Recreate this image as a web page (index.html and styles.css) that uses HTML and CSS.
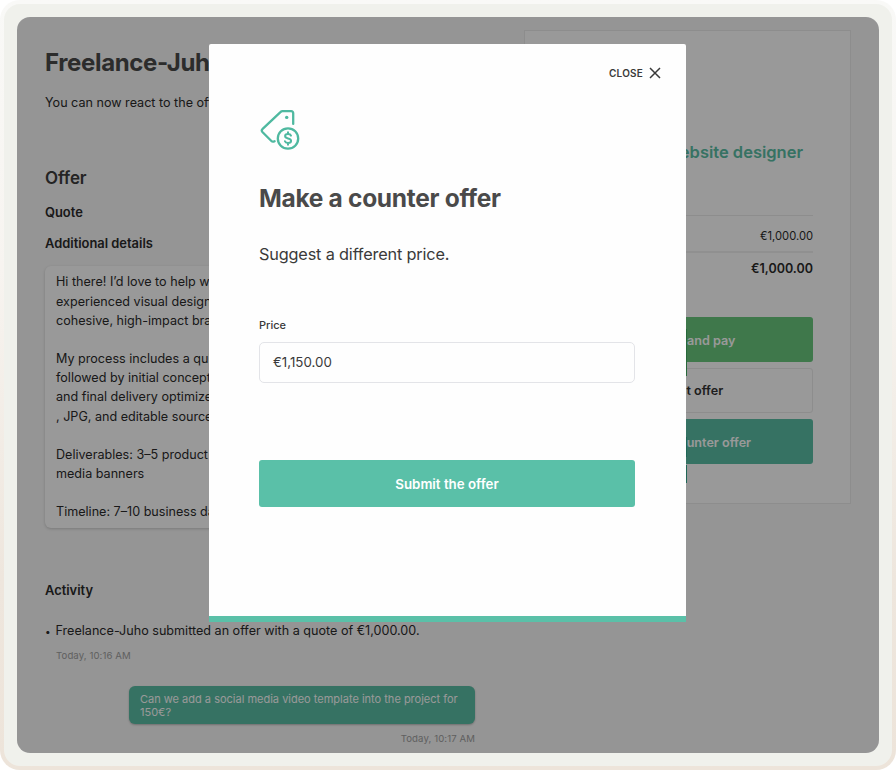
FILE: index.html
```html
<!DOCTYPE html>
<html lang="en">
<head>
	<meta charset="utf-8">
	<title>Make a counter offer</title>
	<link rel="stylesheet" href="styles.css">
</head>
<body>
<div class="frame">
	<div class="screen">
		<div class="page">
			<main class="main">
				<h1>Freelance-Juho</h1>
				<p class="intro">You can now react to the offer.</p>
				<h2>Offer</h2>
				<h3 class="quote">Quote</h3>
				<h3 class="details">Additional details</h3>
				<div class="message">
					Hi there! I’d love to help with<br>
					experienced visual designer<br>
					cohesive, high-impact brand<br>
					<br>
					My process includes a quick<br>
					followed by initial concepts<br>
					and final delivery optimized<br>
					, JPG, and editable source<br>
					<br>
					Deliverables: 3–5 product<br>
					media banners<br>
					<br>
					Timeline: 7–10 business days
				</div>
				<h3 class="activity">Activity</h3>
				<div class="event"><span class="dot">•</span><span>Freelance-Juho submitted an offer with a quote of €1,000.00.</span></div>
				<div class="time">Today, 10:16 AM</div>
				<div class="bubble">Can we add a social media video template into the project for<br>150€?</div>
				<div class="time sent">Today, 10:17 AM</div>
			</main>
			<aside class="panel">
				<h2 class="listing">Website designer</h2>
				<div class="row">€1,000.00</div>
				<div class="row total">€1,000.00</div>
				<div class="actions">
					<div class="btn accept">Accept and pay</div>
					<div class="btn reject">Reject offer</div>
					<div class="btn counter">Make a counter offer</div>
				</div>
			</aside>
		</div>
		<div class="overlay">
			<div class="modal">
				<div class="close">
					<span>CLOSE</span>
					<svg width="12" height="12" viewBox="0 0 12 12"><path d="M1 1l10 10M11 1L1 11" fill="none" stroke="#3a3a3a" stroke-width="1.5"/></svg>
				</div>
				<svg class="icon" width="40" height="40" viewBox="0 0 40 40" fill="none" stroke="#4fb9a0" stroke-width="2.3" stroke-linecap="round" stroke-linejoin="round">
					<path d="M33.2 13.9V3.2Q33.2 1.2 31.2 1.2H22.4Q21.4 1.2 20.7 1.9L2.4 19.2Q1.1 20.6 2.4 22L11.4 31Q12.6 32.2 14.6 31.2"/>
					<circle cx="26.7" cy="7.4" r="1.7" fill="#4fb9a0" stroke="none"/>
					<circle cx="28" cy="28.5" r="10.2"/>
					<path d="M31 25.6Q30.4 24 28 24Q25.1 24 25.1 26.1Q25.1 27.9 28 28.4Q31.1 28.9 31.1 30.8Q31.1 33 28 33Q25.5 33 24.9 31.2M28 22.3V24M28 33V34.7" stroke-width="2"/>
				</svg>
				<h2 class="heading">Make a counter offer</h2>
				<p class="sub">Suggest a different price.</p>
				<label class="label">Price</label>
				<div class="field">€1,150.00</div>
				<div class="submit">Submit the offer</div>
			</div>
		</div>
	</div>
</div>
</body>
</html>
```
FILE: styles.css
```css
* {
	box-sizing: border-box;
}

body {
	margin: 0;
	background: #fff;
	font-family: Inter, "Liberation Sans", sans-serif;
	font-size: 12.6px;
	color: #2b2b2b;
}

h1, h2, h3, p {
	margin: 0;
}

.frame {
	width: 896px;
	height: 770px;
	padding: 13px;
	border: 4px solid transparent;
	border-radius: 20px;
	background: linear-gradient(#f0f1ec, #f0f1ec) padding-box, linear-gradient(#f9f9f7, #f7f4f0 35%, #eee6dd 75%, #ede4da) border-box;
}

.screen {
	position: relative;
	width: 862px;
	height: 736px;
	border-radius: 13px;
	overflow: hidden;
	background: #f8f8f8;
}

.page {
	display: flex;
	align-items: flex-start;
	padding: 0 28px;
}

.main {
	width: 430px;
	padding-top: 31px;
	white-space: nowrap;
}

h1 {
	font-size: 24px;
	line-height: 30px;
	font-weight: 700;
	letter-spacing: -0.35px;
	color: #4a4a4a;
}

.intro {
	margin-top: 15px;
	line-height: 20px;
}

h2 {
	margin-top: 53px;
	font-size: 17px;
	line-height: 24px;
	font-weight: 600;
	letter-spacing: -0.1px;
	color: #3d3d3d;
}

h3 {
	font-size: 12.9px;
	line-height: 20px;
	font-weight: 600;
}

.quote {
	margin-top: 13px;
}

.details {
	margin-top: 11px;
}

.message {
	margin-top: 12px;
	height: 262px;
	padding: 6.4px 11px;
	border-radius: 6px;
	background: #fff;
	box-shadow: 0 1px 3px rgba(0, 0, 0, 0.18);
	line-height: 19.17px;
	overflow: hidden;
}

.activity {
	margin-top: 53px;
}

.event {
	display: flex;
	margin-top: 20px;
	line-height: 20px;
}

.dot {
	width: 10.5px;
	font-size: 10px;
}

.time {
	margin: 8px 0 0 11px;
	font-size: 9.6px;
	line-height: 14px;
	letter-spacing: 0.1px;
	color: #a0a0a0;
}

.bubble {
	margin: 23px 0 0 84px;
	height: 38px;
	padding: 6.5px 11px;
	border-radius: 6px;
	background: #5abea5;
	box-shadow: 0 1px 2px rgba(0, 0, 0, 0.25);
	color: #fff;
	font-size: 11px;
	line-height: 13px;
}

.sent {
	text-align: right;
}

.panel {
	width: 327px;
	height: 474px;
	margin: 13px 0 0 49px;
	padding: 0 37px 0 38px;
	border: 1px solid #ececec;
	background: #fff;
}

.listing {
	margin: 109px 10px 0 0;
	text-align: right;
	font-size: 16.5px;
	letter-spacing: 0;
	color: #5abea5;
}

.row {
	margin-top: 51px;
	height: 36px;
	border-top: 1px solid #ebebeb;
	text-align: right;
	font-size: 11.2px;
	line-height: 40px;
}

.total {
	margin-top: 0;
	border-top-width: 2px;
	border-color: #f0f0f0;
	font-size: 12.5px;
	line-height: 31px;
	font-weight: 600;
}

.actions {
	display: flex;
	flex-direction: column;
	gap: 6px;
	margin-top: 30px;
}

.btn {
	height: 45px;
	border-radius: 3px;
	text-align: center;
	font-size: 12.6px;
	line-height: 47px;
	font-weight: 600;
	color: #fff;
}

.accept {
	background: #69c87d;
}

.reject {
	border: 1px solid #ececec;
	line-height: 43px;
	color: #333;
}

.counter {
	background: #5abea5;
}

.overlay {
	position: absolute;
	top: 0;
	right: 0;
	bottom: 0;
	left: 0;
	padding: 27px 0 0 192px;
	background: rgba(0, 0, 0, 0.4);
}

.modal {
	position: relative;
	display: flex;
	flex-direction: column;
	width: 477px;
	height: 578px;
	padding: 22px 51px 0 50px;
	border-bottom: 6px solid #5ac0a8;
	border-radius: 2px 2px 0 0;
	background: #fefefe;
}

/* thin coloured edge beside the buttons */
.modal::after {
	content: "";
	position: absolute;
	top: 285px;
	left: 100%;
	width: 1px;
	height: 154px;
	background: linear-gradient(#27683a 47px, transparent 47px, transparent 108px, #1f6656 108px, #1f6656 128px, transparent 128px, transparent 136px, #1f6656 136px);
}

.close {
	display: flex;
	align-items: center;
	justify-content: flex-end;
	gap: 6px;
	height: 14px;
	margin-right: -26px;
	font-size: 10px;
	font-weight: 600;
	letter-spacing: 0.2px;
	color: #3a3a3a;
}

.icon {
	margin: 30px 0 0 1px;
}

.heading {
	margin-top: 33px;
	font-size: 24.5px;
	line-height: 30px;
	font-weight: 700;
	letter-spacing: -0.3px;
	color: #4a4a4a;
}

.sub {
	margin-top: 29px;
	font-size: 16.3px;
	line-height: 24px;
	letter-spacing: -0.17px;
	color: #3a3a3a;
}

.label {
	margin-top: 51px;
	font-size: 11px;
	line-height: 16px;
	font-weight: 500;
	color: #3a3a3a;
}

.field {
	margin-top: 9px;
	height: 41px;
	padding-left: 13px;
	border: 1px solid #e3e4e8;
	border-radius: 5px;
	font-size: 13.3px;
	line-height: 39px;
	color: #3a3a3a;
}

.submit {
	margin-top: 77px;
	height: 47px;
	border-radius: 3px;
	background: #5ac0a8;
	text-align: center;
	font-size: 13.3px;
	line-height: 48px;
	font-weight: 600;
	color: #fff;
}
```
